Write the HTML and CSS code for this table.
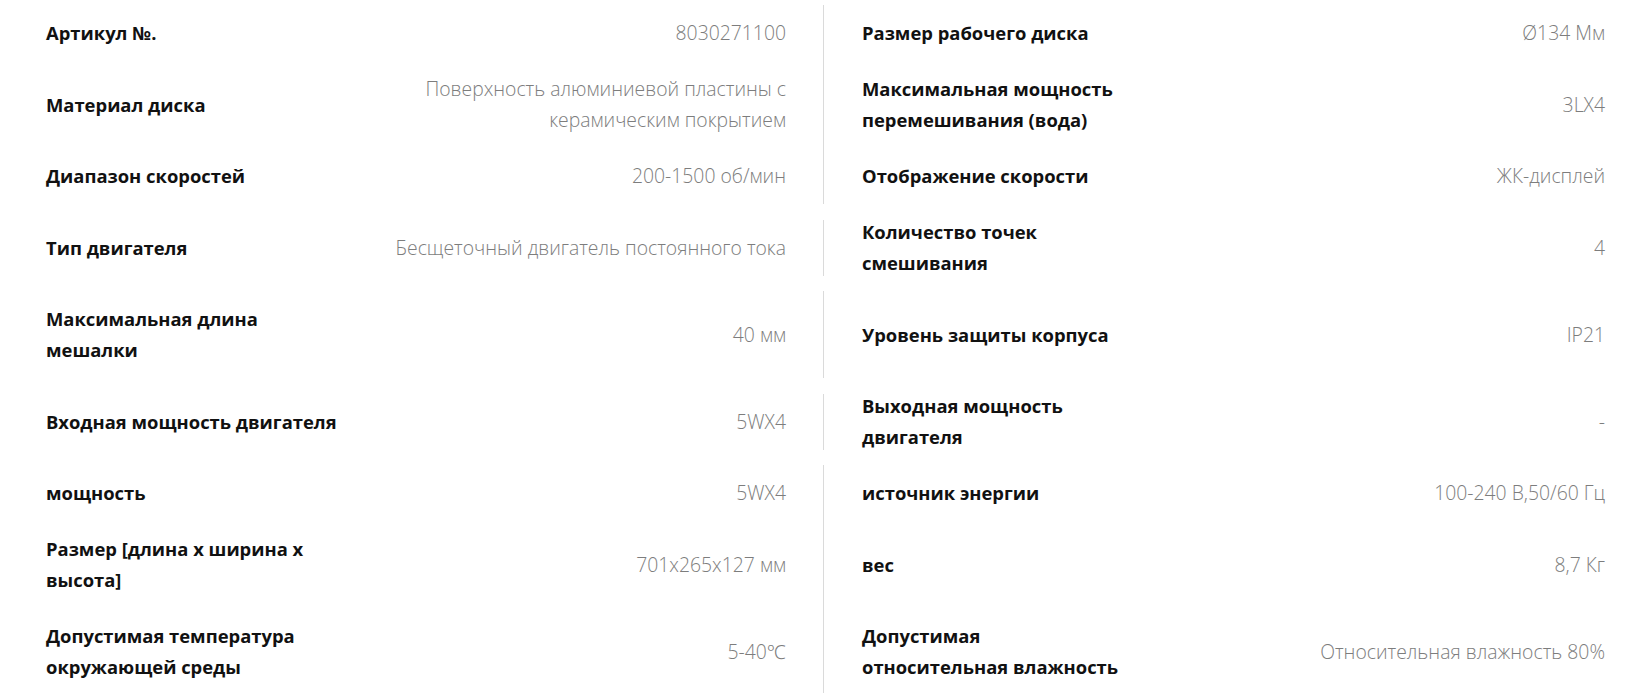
FILE: index.html
```html
<!DOCTYPE html>
<html lang="ru">
<head>
<meta charset="utf-8">
<title>Характеристики</title>
<link rel="stylesheet" href="styles.css">
</head>
<body>
<div class="specs">
  <div class="row">
    <div class="cell cell-left"><span class="label">Артикул №.</span><span class="value">8030271100</span></div>
    <div class="cell cell-right"><span class="label">Размер рабочего диска</span><span class="value">Ø134 Мм</span></div>
  </div>
  <div class="row">
    <div class="cell cell-left"><span class="label">Материал диска</span><span class="value">Поверхность алюминиевой пластины с<br>керамическим покрытием</span></div>
    <div class="cell cell-right"><span class="label">Максимальная мощность<br>перемешивания (вода)</span><span class="value">3LX4</span></div>
  </div>
  <div class="row">
    <div class="cell cell-left"><span class="label">Диапазон скоростей</span><span class="value">200-1500 об/мин</span></div>
    <div class="cell cell-right"><span class="label">Отображение скорости</span><span class="value">ЖК-дисплей</span></div>
  </div>
  <div class="row">
    <div class="cell cell-left"><span class="label">Тип двигателя</span><span class="value">Бесщеточный двигатель постоянного тока</span></div>
    <div class="cell cell-right"><span class="label">Количество точек<br>смешивания</span><span class="value">4</span></div>
  </div>
  <div class="row">
    <div class="cell cell-left"><span class="label">Максимальная длина<br>мешалки</span><span class="value">40 мм</span></div>
    <div class="cell cell-right"><span class="label">Уровень защиты корпуса</span><span class="value">IP21</span></div>
  </div>
  <div class="row">
    <div class="cell cell-left"><span class="label">Входная мощность двигателя</span><span class="value">5WX4</span></div>
    <div class="cell cell-right"><span class="label">Выходная мощность<br>двигателя</span><span class="value">-</span></div>
  </div>
  <div class="row">
    <div class="cell cell-left"><span class="label">мощность</span><span class="value">5WX4</span></div>
    <div class="cell cell-right"><span class="label">источник энергии</span><span class="value">100-240 В,50/60 Гц</span></div>
  </div>
  <div class="row">
    <div class="cell cell-left"><span class="label">Размер [длина x ширина x<br>высота]</span><span class="value">701x265x127 мм</span></div>
    <div class="cell cell-right"><span class="label">вес</span><span class="value">8,7 Кг</span></div>
  </div>
  <div class="row">
    <div class="cell cell-left"><span class="label">Допустимая температура<br>окружающей среды</span><span class="value">5-40℃</span></div>
    <div class="cell cell-right"><span class="label">Допустимая<br>относительная влажность</span><span class="value">Относительная влажность 80%</span></div>
  </div>
</div>
</body>
</html>
```

FILE: styles.css
```css
html, body {
  margin: 0;
  padding: 0;
  background: #ffffff;
}

body {
  font-family: "Open Sans", "Noto Sans", "Liberation Sans", sans-serif;
  font-size: 18px;
  line-height: 31px;
}

.specs {
  padding-top: 5px;
}

.row {
  display: flex;
  align-items: center;
}

.cell {
  display: flex;
  align-items: center;
  justify-content: space-between;
  box-sizing: border-box;
  padding-top: 12px;
  padding-bottom: 13px;
}

.cell-left {
  width: 824px;
  padding-left: 46px;
  padding-right: 37px;
  border-right: 1px solid #dadada;
}

.cell-right {
  flex: 1;
  padding-left: 38px;
  padding-right: 32px;
}

.label {
  font-size: 18.4px;
  font-weight: 700;
  color: #111111;
  white-space: nowrap;
}

.value {
  font-size: 19.35px;
  font-weight: 300;
  color: #7d7d7d;
  text-align: right;
  white-space: nowrap;
}
```
